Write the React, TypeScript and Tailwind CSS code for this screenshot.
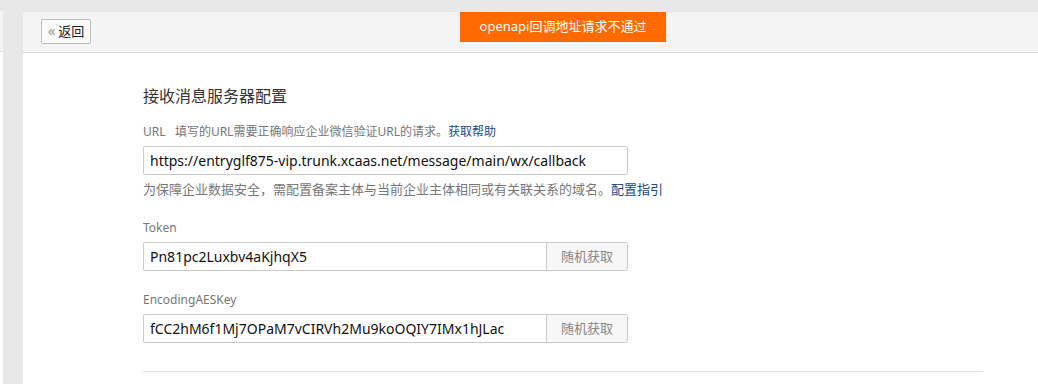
import React from 'react';

const font = '[font-family:"Noto_Sans","Noto_Sans_CJK_SC",sans-serif]';

function Field({
  label,
  value,
  action,
}: {
  label: React.ReactNode;
  value: string;
  action?: string;
}) {
  return (
    <>
      <div className="text-[12px] leading-[20px] text-[#777]">{label}</div>
      <div className="mt-[4px] flex h-[29px] w-[485px] rounded-[2px] border border-[#ccc] bg-white">
        <div className="flex flex-1 items-center px-[6px] text-[14px] text-[#111] whitespace-nowrap overflow-hidden">
          {value}
        </div>
        {action && (
          <button className="w-[81px] border-l border-[#ccc] bg-[#f7f7f7] text-[13px] text-[#888]">
            {action}
          </button>
        )}
      </div>
    </>
  );
}

export default function App() {
  return (
    <div className={`relative flex h-[384px] w-[1038px] overflow-hidden bg-[#e8e8e8] ${font}`}>
      <div className="flex w-[3px] flex-col">
        <div className="h-[11px]" />
        <div className="h-[41px] border-b border-[#ddd] bg-[#f4f4f4]" />
        <div className="flex-1 bg-white" />
      </div>

      <div className="ml-[20px] mt-[12px] flex flex-1 flex-col overflow-hidden rounded-tl-[4px] bg-white">
        <div className="flex h-[41px] items-start border-b border-[#ddd] bg-[#f4f4f4] pl-[18px] pt-[7px]">
          <button className="flex h-[25px] w-[50px] items-center justify-center gap-[3px] rounded-[2px] border border-[#bbb] bg-[#fafafa] text-[13px] text-[#222]">
            <span className="-mt-[2px] text-[15px] leading-none text-[#999]">«</span>
            返回
          </button>
        </div>

        <div className="pl-[120px] pr-[55px] pt-[31px]">
          <h1 className="text-[16px] leading-[24px] text-[#333]">接收消息服务器配置</h1>

          <div className="mt-[14px]">
            <Field
              label={
                <>
                  URL&nbsp;&nbsp; 填写的URL需要正确响应企业微信验证URL的请求。
                  <a className="text-[#1a4a87]">获取帮助</a>
                </>
              }
              value="https://entryglf875-vip.trunk.xcaas.net/message/main/wx/callback"
            />
          </div>
          <p className="mt-[4px] text-[13px] leading-[20px] text-[#777]">
            为保障企业数据安全，需配置备案主体与当前企业主体相同或有关联关系的域名。
            <a className="text-[#1a4a87]">配置指引</a>
          </p>

          <div className="mt-[19px]">
            <Field label="Token" value="Pn81pc2Luxbv4aKjhqX5" action="随机获取" />
          </div>

          <div className="mt-[19px]">
            <Field
              label="EncodingAESKey"
              value="fCC2hM6f1Mj7OPaM7vCIRVh2Mu9koOQIY7IMx1hJLac"
              action="随机获取"
            />
          </div>

          <div className="mt-[28px] border-t border-[#e5e5e5]" />
        </div>
      </div>

      <div className="absolute left-[460px] top-[12px] flex h-[30px] w-[206px] items-center justify-center bg-[#ff6a00] text-[13px] text-white">
        openapi回调地址请求不通过
      </div>
    </div>
  );
}
